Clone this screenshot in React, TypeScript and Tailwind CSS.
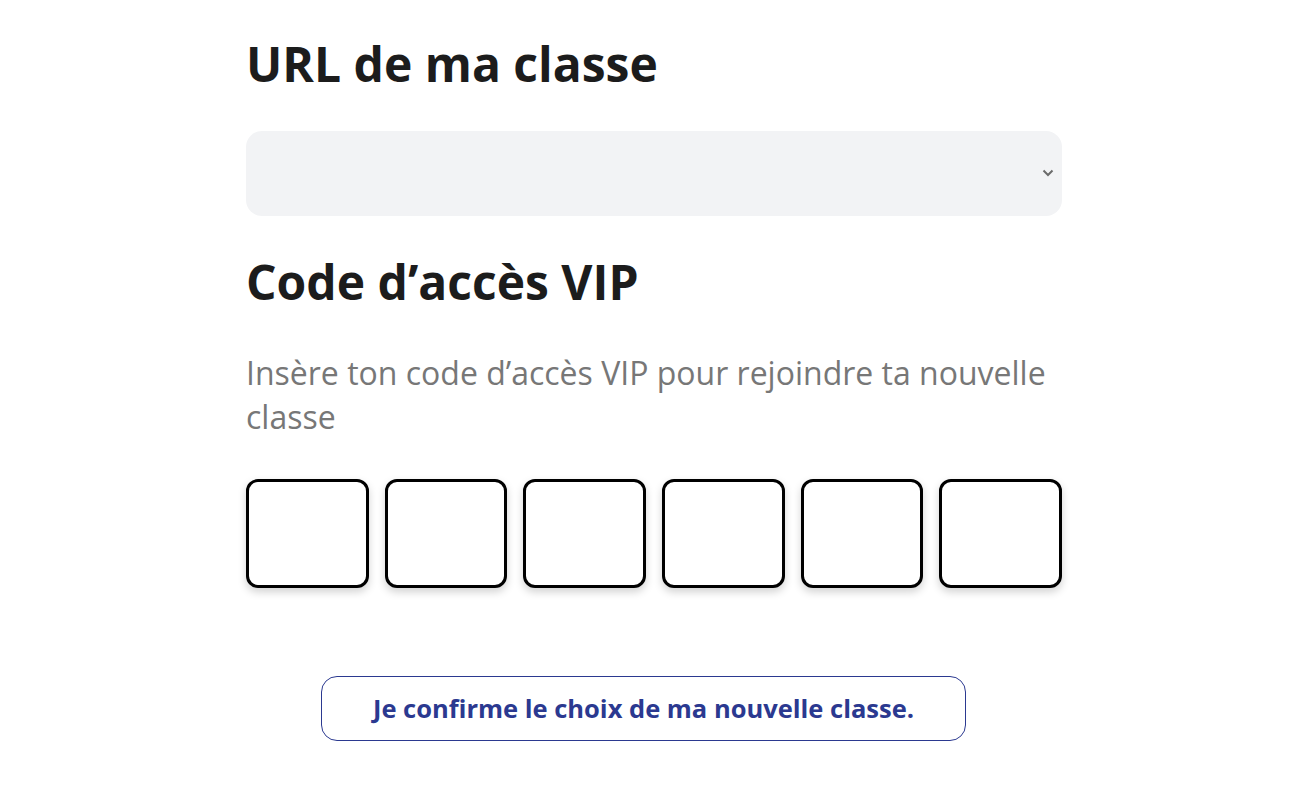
import React from 'react';

const font = { fontFamily: '"Open Sans", "Noto Sans", sans-serif' };

const CodeBox: React.FC = () => (
    <input
        type="text"
        maxLength={1}
        className="h-[109px] w-full rounded-[12px] border-[3px] border-black bg-white text-center text-4xl font-bold outline-none shadow-[0_4px_8px_rgba(0,0,0,0.18)]"
    />
);

export default function App() {
    const slots = [0, 1, 2, 3, 4, 5];

    return (
        <div className="min-h-[790px] bg-white text-[#1c1c1c]" style={font}>
            <div className="ml-[246px] w-[816px] pt-[35px]">
                <h2 className="text-[48px] font-bold leading-[58px]">URL de ma classe</h2>

                {/* Class selector */}
                <div className="relative mt-[38px] h-[85px] rounded-[16px] bg-[#f2f3f5]">
                    <select className="h-full w-full appearance-none rounded-[16px] bg-transparent px-6 text-xl outline-none" defaultValue="">
                        <option value=""></option>
                    </select>
                    <svg
                        className="pointer-events-none absolute right-[7px] top-[37px]"
                        width="14"
                        height="10"
                        viewBox="0 0 14 10"
                        fill="none"
                    >
                        <path d="M2.5 2.5l4.5 4.5 4.5-4.5" stroke="#6b6b6b" strokeWidth="2" />
                    </svg>
                </div>

                <h2 className="mt-[37px] text-[48px] font-bold leading-[58px]">Code d’accès VIP</h2>

                <p className="mt-[40px] text-[32px] leading-[44px] text-[#777777]">
                    Insère ton code d’accès VIP pour rejoindre ta nouvelle classe
                </p>

                {/* VIP code boxes */}
                <div className="mt-[40px] grid grid-cols-6 gap-4">
                    {slots.map(i => (
                        <CodeBox key={i} />
                    ))}
                </div>

                <button className="ml-[75px] mt-[88px] h-[65px] w-[645px] rounded-[16px] border border-[#2b3990] bg-white text-[25.5px] font-bold text-[#2b3990]">
                    Je confirme le choix de ma nouvelle classe.
                </button>
            </div>
        </div>
    );
}
